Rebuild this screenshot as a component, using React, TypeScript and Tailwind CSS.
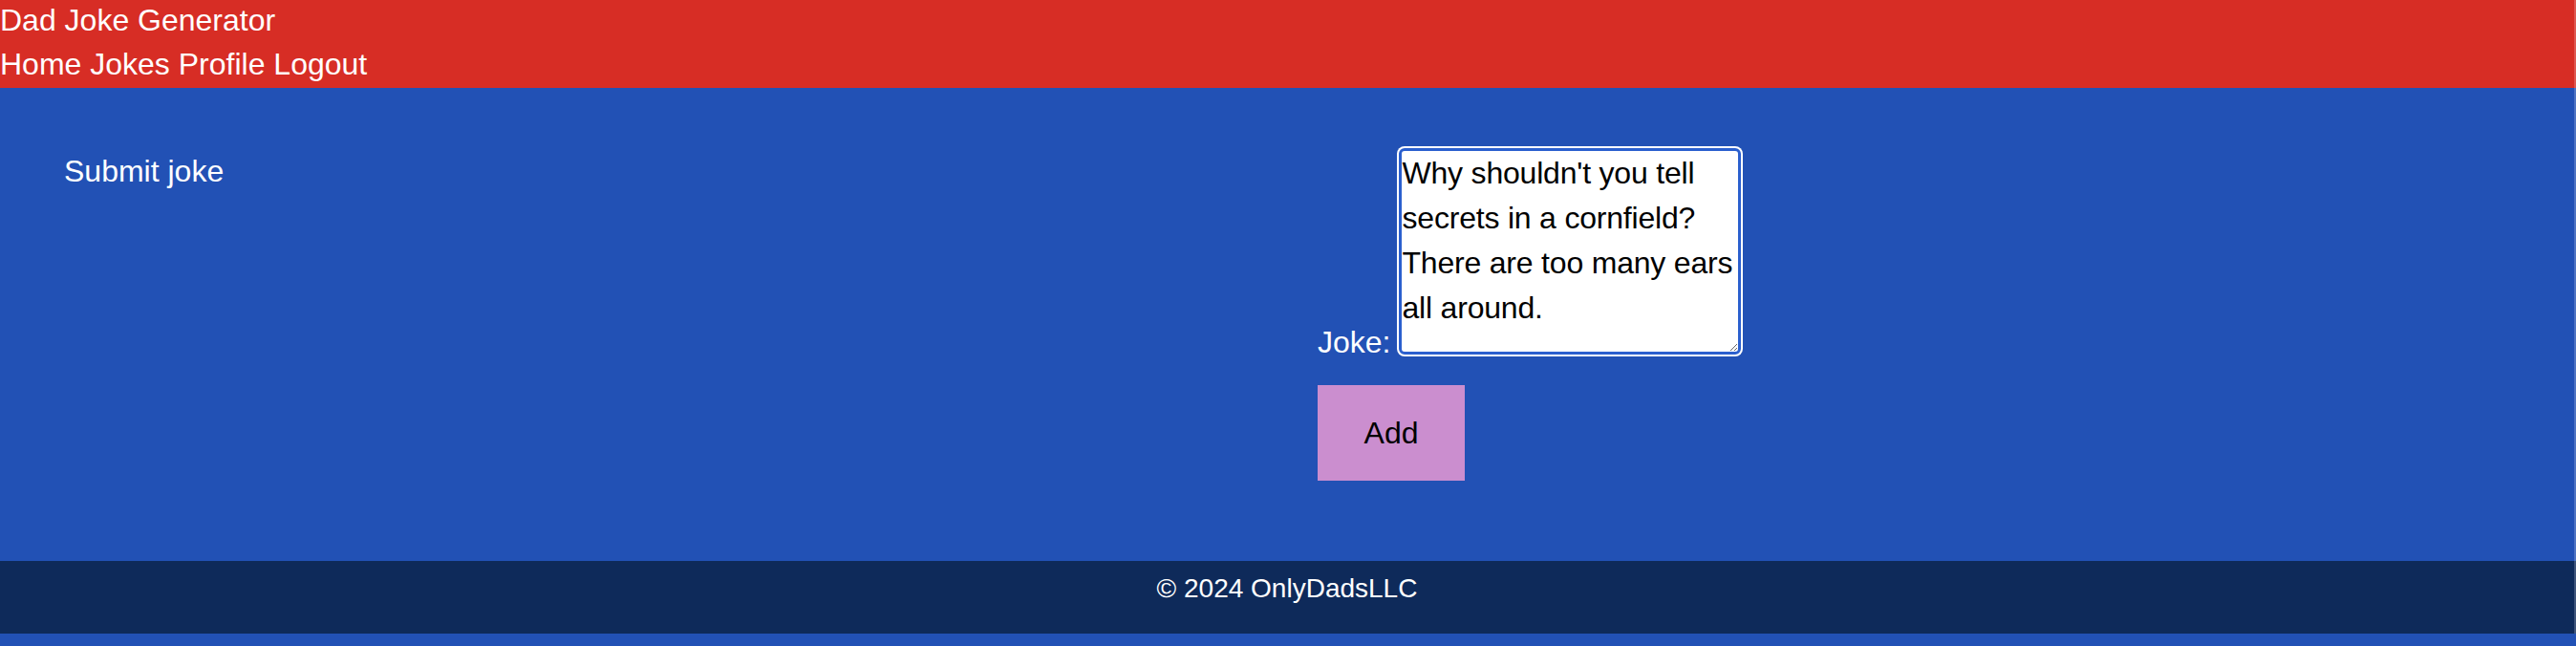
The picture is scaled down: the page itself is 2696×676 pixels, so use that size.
export default function App() {
  return (
    <div className="min-h-[676px] bg-[#2251b5] font-['Liberation_Sans',Arial,sans-serif] text-white">
      {/* Header */}
      <header className="border-r-2 border-white/20 bg-[#d72d25] text-[32px]">
        <div className="leading-[42px]">Dad Joke Generator</div>
        <nav className="leading-[50px]">
          <a>Home</a> <a>Jokes</a> <a>Profile</a> <a>Logout</a>
        </nav>
      </header>

      {/* Form */}
      <main className="grid h-[495px] grid-cols-2 gap-16 border-r-2 border-white/20 px-16 pt-16 text-[32px]">
        <h2 className="ml-[3px] leading-[46px]">Submit joke</h2>
        <form className="flex flex-col items-start">
          <div className="flex items-end gap-[9px]">
            <label className="mb-[-3px] leading-[32px]">Joke:</label>
            <textarea
              defaultValue="Why shouldn't you tell secrets in a cornfield? There are too many ears all around."
              className="-mt-[1px] h-[216px] w-[358px] resize overflow-hidden rounded-[6px] border-[3px] border-[#2b5fce] bg-white p-0 text-[32px] leading-[47px] tracking-[-0.2px] text-black outline-none ring-2 ring-white"
            />
          </div>
          <button
            type="button"
            className="mt-8 h-[100px] w-[154px] bg-[#cb8ecf] text-[32px] text-black"
          >
            Add
          </button>
        </form>
      </main>

      {/* Footer */}
      <footer className="h-[76px] border-r-2 border-white/20 bg-[#0e2a5a] pt-[13px] text-center text-[28px] leading-[32px]">
        © 2024 OnlyDadsLLC
      </footer>
    </div>
  );
}
